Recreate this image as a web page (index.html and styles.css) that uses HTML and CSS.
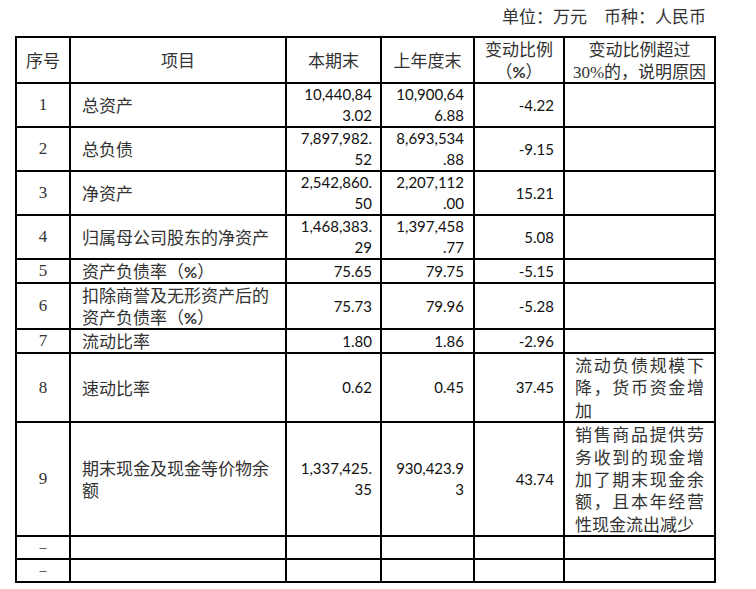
FILE: index.html
```html
<!DOCTYPE html>
<html lang="zh-CN">
<head>
<meta charset="utf-8">
<title>主要会计数据</title>
<link rel="stylesheet" href="styles.css">
</head>
<body>
<div class="page">
  <div class="unit">单位：万元　币种：人民币</div>
  <table class="fin">
    <colgroup>
      <col class="c-no"><col class="c-item"><col class="c-cur"><col class="c-prev"><col class="c-chg"><col class="c-why">
    </colgroup>
    <thead>
      <tr>
        <th>序号</th>
        <th>项目</th>
        <th>本期末</th>
        <th>上年度末</th>
        <th>变动比例<br>（<span class="pct">%</span>）</th>
        <th>变动比例超过<br><span class="ser">30%</span>的，说明原因</th>
      </tr>
    </thead>
    <tbody>
      <tr>
        <td class="no">1</td><td class="item">总资产</td>
        <td class="num cur">10,440,84<br>3.02</td><td class="num prev">10,900,64<br>6.88</td>
        <td class="num chg">-4.22</td><td class="why"></td>
      </tr>
      <tr>
        <td class="no">2</td><td class="item">总负债</td>
        <td class="num cur">7,897,982.<br>52</td><td class="num prev">8,693,534<br>.88</td>
        <td class="num chg">-9.15</td><td class="why"></td>
      </tr>
      <tr>
        <td class="no">3</td><td class="item">净资产</td>
        <td class="num cur">2,542,860.<br>50</td><td class="num prev">2,207,112<br>.00</td>
        <td class="num chg">15.21</td><td class="why"></td>
      </tr>
      <tr>
        <td class="no">4</td><td class="item">归属母公司股东的净资产</td>
        <td class="num cur">1,468,383.<br>29</td><td class="num prev">1,397,458<br>.77</td>
        <td class="num chg">5.08</td><td class="why"></td>
      </tr>
      <tr>
        <td class="no">5</td><td class="item">资产负债率（<span class="pct">%</span>）</td>
        <td class="num cur">75.65</td><td class="num prev">79.75</td>
        <td class="num chg">-5.15</td><td class="why"></td>
      </tr>
      <tr>
        <td class="no">6</td><td class="item">扣除商誉及无形资产后的资产负债率（<span class="pct">%</span>）</td>
        <td class="num cur">75.73</td><td class="num prev">79.96</td>
        <td class="num chg">-5.28</td><td class="why"></td>
      </tr>
      <tr>
        <td class="no">7</td><td class="item">流动比率</td>
        <td class="num cur">1.80</td><td class="num prev">1.86</td>
        <td class="num chg">-2.96</td><td class="why"></td>
      </tr>
      <tr>
        <td class="no">8</td><td class="item">速动比率</td>
        <td class="num cur">0.62</td><td class="num prev">0.45</td>
        <td class="num chg">37.45</td><td class="why">流动负债规模下降，货币资金增加</td>
      </tr>
      <tr>
        <td class="no">9</td><td class="item">期末现金及现金等价物余额</td>
        <td class="num cur">1,337,425.<br>35</td><td class="num prev">930,423.9<br>3</td>
        <td class="num chg">43.74</td><td class="why">销售商品提供劳务收到的现金增加了期末现金余额，且本年经营性现金流出减少</td>
      </tr>
      <tr class="blank">
        <td class="no dash">–</td><td class="item"></td>
        <td class="num cur"></td><td class="num prev"></td>
        <td class="num chg"></td><td class="why"></td>
      </tr>
      <tr class="blank">
        <td class="no dash">–</td><td class="item"></td>
        <td class="num cur"></td><td class="num prev"></td>
        <td class="num chg"></td><td class="why"></td>
      </tr>
    </tbody>
  </table>
</div>
</body>
</html>
```

FILE: styles.css
```css
html, body {
  margin: 0;
  padding: 0;
  background: #ffffff;
}

.page {
  padding: 4px 0 0 15px;
  font-family: "Noto Sans CJK SC", "Noto Sans", sans-serif;
  color: #333333;
}

.unit {
  font-size: 17px;
  line-height: 23px;
  text-align: right;
  padding-right: 50px;
  margin-bottom: 9px;
  color: #333333;
}

.fin {
  border-collapse: collapse;
  table-layout: fixed;
  width: 701px;
}

.c-no { width: 54px; }
.c-item { width: 216px; }
.c-cur { width: 95px; }
.c-prev { width: 93px; }
.c-chg { width: 90px; }
.c-why { width: 151px; }

.fin th,
.fin td {
  border: 2px solid #000000;
  padding: 0;
  font-size: 17px;
  line-height: 22px;
  font-weight: 400;
  vertical-align: middle;
  color: #333333;
}

.fin th {
  text-align: center;
  white-space: nowrap;
}

.pct {
  font-family: "Lato", "Open Sans", sans-serif;
  font-size: 16px;
  font-weight: 700;
  line-height: 16px;
  color: #333333;
}

.ser {
  font-family: "Liberation Serif", serif;
  line-height: 17px;
}

.no {
  text-align: center;
  font-family: "Liberation Serif", serif;
}

.dash {
  color: #666666;
  font-size: 14px !important;
  line-height: 21px !important;
}

.item {
  padding: 0 8px 0 11px !important;
}

.num {
  font-family: "Lato", "Open Sans", sans-serif;
  font-size: 15px !important;
  line-height: 21px !important;
  text-align: right;
  color: #111111 !important;
}

.cur { padding-right: 8px !important; }
.prev { padding-right: 9px !important; }
.chg { padding-right: 9px !important; }

.why {
  padding: 0 10px !important;
  text-align: justify;
  line-height: 22.4px !important;
}

.blank td {
  height: 21px;
  line-height: 21px;
}
```
